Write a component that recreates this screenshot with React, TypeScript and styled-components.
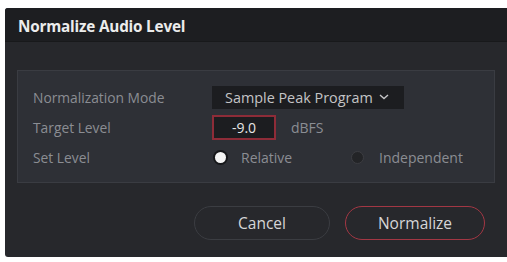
import React from "react";
import styled, { createGlobalStyle } from "styled-components";

const Global = createGlobalStyle`
  html, body { margin: 0; padding: 0; background: #ffffff; }
  body { font-family: "Open Sans", "Noto Sans", sans-serif; }
`;

const Page = styled.div`
  width: 507px;
  height: 262px;
  padding: 8px 0 5px 5px;
  box-sizing: border-box;
`;

const Dialog = styled.div`
  width: 502px;
  height: 249px;
  background: #27282c;
  border-radius: 3px 0 0 3px;
  display: flex;
  flex-direction: column;
  overflow: hidden;
`;

const TitleBar = styled.div`
  height: 34px;
  box-sizing: border-box;
  background: #1d1e21;
  border-bottom: 1px solid #18191b;
  display: flex;
  align-items: center;
  padding: 3px 0 0 13px;
  color: #ececec;
  font-size: 15.3px;
  font-weight: 700;
  letter-spacing: -0.2px;
`;

const Body = styled.div`
  flex: 1;
  display: flex;
  flex-direction: column;
  padding: 28px 12px 0 12px;
`;

const Panel = styled.div`
  height: 113px;
  background: #2e3036;
  border: 1px solid #3a3c42;
  box-sizing: border-box;
  display: grid;
  grid-template-columns: 179px 1fr;
  grid-auto-rows: 30px;
  align-content: start;
  padding: 11px 0 0 15px;
`;

const Label = styled.div`
  color: #8b8d93;
  font-size: 13.8px;
  display: flex;
  align-items: center;
`;

const Field = styled.div`
  display: flex;
  align-items: center;
  gap: 15px;
`;

const Select = styled.div`
  height: 23px;
  width: 192px;
  box-sizing: border-box;
  background: #1c1d20;
  color: #c4c4c6;
  font-size: 14.4px;
  display: flex;
  align-items: center;
  padding-left: 13px;
  gap: 6px;
`;

const NumberBox = styled.div`
  width: 64px;
  height: 25px;
  box-sizing: border-box;
  border: 2px solid #8e2c38;
  background: #1c1d20;
  color: #e6e6e6;
  font-size: 14px;
  display: flex;
  align-items: center;
  justify-content: center;
`;

const Unit = styled.span`
  color: #8b8d93;
  font-size: 14px;
`;

const RadioGroup = styled.div`
  display: flex;
  align-items: center;
  padding-left: 3px;
`;

const RadioItem = styled.div<{ $w: number }>`
  display: flex;
  align-items: center;
  gap: 15px;
  width: ${(p) => p.$w}px;
  color: #8b8d93;
  font-size: 14px;
`;

const Dot = styled.span<{ $on?: boolean }>`
  box-sizing: border-box;
  width: ${(p) => (p.$on ? 11 : 13)}px;
  height: ${(p) => (p.$on ? 11 : 13)}px;
  border-radius: 50%;
  background: ${(p) => (p.$on ? "#f4f4f4" : "#232427")};
  border: ${(p) => (p.$on ? "none" : "1px solid #3c3d42")};
  box-shadow: ${(p) => (p.$on ? "0 0 0 2px #16171a" : "none")};
`;

const Footer = styled.div`
  display: flex;
  justify-content: flex-end;
  gap: 15px;
  padding: 23px 10px 0 0;
`;

const Button = styled.button<{ $primary?: boolean }>`
  width: ${(p) => (p.$primary ? 140 : 136)}px;
  height: 34px;
  border-radius: 17px;
  background: #27282c;
  border: 1.5px solid ${(p) => (p.$primary ? "#a33744" : "#3b3d42")};
  color: #d6d6d8;
  font-family: "Open Sans", "Noto Sans", sans-serif;
  font-size: 15.5px;
  padding: 0;
`;

export default function App() {
  return (
    <>
      <Global />
      <Page>
        <Dialog>
          <TitleBar>Normalize Audio Level</TitleBar>
          <Body>
            <Panel>
              <Label>Normalization Mode</Label>
              <Field>
                <Select>
                  Sample Peak Program
                  <svg width="10" height="6" viewBox="0 0 10 6">
                    <path d="M1 1l4 3.5L9 1" stroke="#c4c4c6" strokeWidth="1.4" fill="none" />
                  </svg>
                </Select>
              </Field>
              <Label>Target Level</Label>
              <Field>
                <NumberBox>-9.0</NumberBox>
                <Unit>dBFS</Unit>
              </Field>
              <Label>Set Level</Label>
              <RadioGroup>
                <RadioItem $w={136}>
                  <Dot $on />
                  Relative
                </RadioItem>
                <RadioItem $w={140}>
                  <Dot />
                  Independent
                </RadioItem>
              </RadioGroup>
            </Panel>
            <Footer>
              <Button>Cancel</Button>
              <Button $primary>Normalize</Button>
            </Footer>
          </Body>
        </Dialog>
      </Page>
    </>
  );
}
